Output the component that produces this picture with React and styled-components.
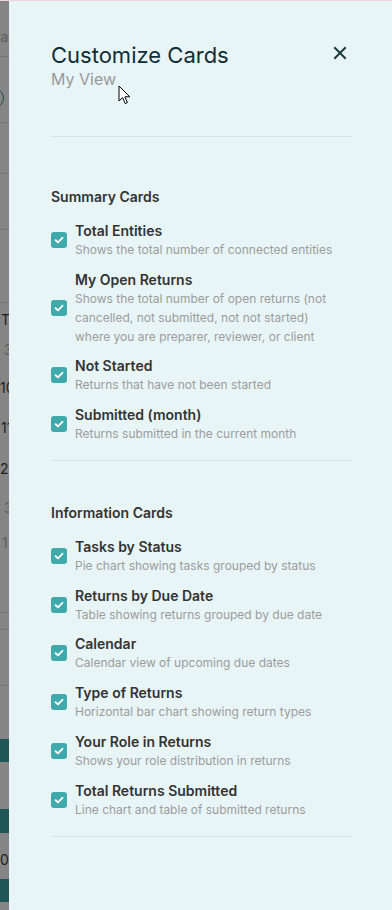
import React from "react";
import styled, { createGlobalStyle } from "styled-components";

const GlobalStyle = createGlobalStyle`
  html, body {
    margin: 0;
    padding: 0;
  }
  body {
    font-family: Inter, "Noto Sans", sans-serif;
    background: #858585;
  }
`;

const Screen = styled.div`
  display: flex;
  height: 910px;
  border-top: 1px solid #f3d3da;
  box-sizing: border-box;
  overflow: hidden;
`;

/* dimmed page peeking out behind the drawer */
const Backdrop = styled.div`
  width: 9px;
  flex-shrink: 0;
  display: flex;
  flex-direction: column;
  background: #858585;
  overflow: hidden;
`;

const Segment = styled.div`
  height: ${({ $h }) => $h}px;
  flex-shrink: 0;
  box-sizing: border-box;
  display: flex;
  align-items: center;
  white-space: nowrap;
  font-size: 14px;
  line-height: 20px;
  color: ${({ $light }) => ($light ? "#5c5c5c" : "#1f1f1f")};
  padding-left: ${({ $pad }) => $pad || 0}px;
  border-bottom: ${({ $line }) => ($line ? "1px solid #747474" : "none")};
  background: ${({ $bar }) => ($bar ? "#1f5656" : "transparent")};
`;

const Ring = styled.span`
  width: 20px;
  height: 20px;
  flex-shrink: 0;
  margin-left: -16px;
  border-radius: 50%;
  border: 1.5px solid #1f4a4a;
  box-sizing: border-box;
`;

const backdropRows = [
  { h: 26 },
  { h: 20, text: "Calendar", light: true, pad: 0, shift: -46 },
  { h: 10, line: true },
  { h: 31 },
  { h: 20, ring: true },
  { h: 15, line: true },
  { h: 51, line: true },
  { h: 56, line: true },
  { h: 73, line: true },
  { h: 7 },
  { h: 20, text: "T", pad: 1 },
  { h: 10 },
  { h: 20, text: "3", light: true, pad: 4 },
  { h: 18 },
  { h: 20, text: "10", pad: 0 },
  { h: 20 },
  { h: 20, text: "11", pad: 1 },
  { h: 21 },
  { h: 20, text: "2", pad: 0 },
  { h: 19 },
  { h: 20, text: "3", light: true, pad: 4 },
  { h: 15 },
  { h: 20, text: "1", light: true, pad: 2 },
  { h: 60, line: true },
  { h: 17, line: true },
  { h: 56, line: true },
  { h: 53 },
  { h: 23, bar: true },
  { h: 47 },
  { h: 24, bar: true },
  { h: 17 },
  { h: 20, text: "0", pad: 0 },
  { h: 9 },
  { h: 23, bar: true },
  { h: 20 },
];

const Shifted = styled.span`
  margin-left: ${({ $shift }) => $shift || 0}px;
`;

const Drawer = styled.aside`
  position: relative;
  flex: 1;
  background: #e8f5f6;
  padding: 40px 40px 0 42px;
  box-sizing: border-box;
`;

const Header = styled.div`
  display: flex;
  justify-content: space-between;
  align-items: flex-start;
`;

const Title = styled.h2`
  margin: 0;
  font-size: 22px;
  line-height: 28px;
  font-weight: 400;
  color: #0f2d36;
`;

const Subtitle = styled.div`
  font-size: 16px;
  line-height: 20px;
  color: #9a9a9a;
`;

const CloseButton = styled.button`
  width: 24px;
  height: 24px;
  padding: 0;
  border: none;
  background: transparent;
  display: flex;
  align-items: center;
  justify-content: center;
  color: #1b3a40;
  cursor: pointer;
`;

const Divider = styled.hr`
  margin: ${({ $top }) => $top}px 0 0;
  border: none;
  height: 1px;
  background: #d3e4e5;
`;

const Section = styled.section`
  padding-top: ${({ $top }) => $top}px;
`;

const SectionTitle = styled.h3`
  margin: 0;
  font-size: 14px;
  line-height: 19px;
  font-weight: 600;
  color: #333333;
`;

const List = styled.div`
  margin-top: 15px;
  display: flex;
  flex-direction: column;
  gap: 10.7px;
`;

const Option = styled.label`
  display: flex;
  align-items: center;
  gap: 8px;
  cursor: pointer;
`;

const Box = styled.span`
  width: 16px;
  height: 16px;
  flex-shrink: 0;
  border-radius: 3px;
  background: #3fa9ab;
  display: flex;
  align-items: center;
  justify-content: center;
`;

const OptionText = styled.div`
  display: flex;
  flex-direction: column;
  padding-right: 14px;
`;

const OptionLabel = styled.div`
  font-size: 14px;
  line-height: 19px;
  font-weight: 600;
  color: #333333;
`;

const OptionDesc = styled.div`
  font-size: 12px;
  line-height: 19px;
  color: #9c9c9c;
`;

const Pointer = styled.svg`
  position: absolute;
  left: 109px;
  top: 84px;
  pointer-events: none;
`;

const summaryCards = [
  { label: "Total Entities", desc: "Shows the total number of connected entities" },
  {
    label: "My Open Returns",
    desc: "Shows the total number of open returns (not cancelled, not submitted, not not started) where you are preparer, reviewer, or client",
  },
  { label: "Not Started", desc: "Returns that have not been started" },
  { label: "Submitted (month)", desc: "Returns submitted in the current month" },
];

const infoCards = [
  { label: "Tasks by Status", desc: "Pie chart showing tasks grouped by status" },
  { label: "Returns by Due Date", desc: "Table showing returns grouped by due date" },
  { label: "Calendar", desc: "Calendar view of upcoming due dates" },
  { label: "Type of Returns", desc: "Horizontal bar chart showing return types" },
  { label: "Your Role in Returns", desc: "Shows your role distribution in returns" },
  { label: "Total Returns Submitted", desc: "Line chart and table of submitted returns" },
];

const Check = () => (
  <Box>
    <svg width="12" height="12" viewBox="0 0 12 12" fill="none">
      <path d="M2.6 6.2 L5 8.4 L9.4 3.8" stroke="#ffffff" strokeWidth="1.9" strokeLinecap="round" strokeLinejoin="round" />
    </svg>
  </Box>
);

const CardGroup = ({ title, items, top }) => (
  <Section $top={top}>
    <SectionTitle>{title}</SectionTitle>
    <List>
      {items.map((item) => (
        <Option key={item.label}>
          <Check />
          <OptionText>
            <OptionLabel>{item.label}</OptionLabel>
            <OptionDesc>{item.desc}</OptionDesc>
          </OptionText>
        </Option>
      ))}
    </List>
    <Divider $top={17} />
  </Section>
);

export default function App() {
  return (
    <>
      <GlobalStyle />
      <Screen>
        <Backdrop>
          {backdropRows.map((row, i) => (
            <Segment key={i} $h={row.h} $line={row.line} $bar={row.bar} $light={row.light} $pad={row.pad}>
              {row.ring && <Ring />}
              {row.text && <Shifted $shift={row.shift}>{row.text}</Shifted>}
            </Segment>
          ))}
        </Backdrop>
        <Drawer>
          <Header>
            <div>
              <Title>Customize Cards</Title>
              <Subtitle>My View</Subtitle>
            </div>
            <CloseButton aria-label="Close">
              <svg width="24" height="24" viewBox="0 0 24 24" fill="none">
                <path d="M7 7 L17 17 M17 7 L7 17" stroke="currentColor" strokeWidth="2" strokeLinecap="square" />
              </svg>
            </CloseButton>
          </Header>
          <Divider $top={47} />
          <CardGroup title="Summary Cards" items={summaryCards} top={50} />
          <CardGroup title="Information Cards" items={infoCards} top={42} />
          <Pointer width="14" height="21" viewBox="0 0 14 21">
            <path d="M1 1 L1 16 L4.6 12.6 L7.2 18.6 L9.4 17.6 L6.9 11.8 L11.8 11.8 Z" fill="#ffffff" stroke="#000000" strokeWidth="1" strokeLinejoin="round" />
          </Pointer>
        </Drawer>
      </Screen>
    </>
  );
}
